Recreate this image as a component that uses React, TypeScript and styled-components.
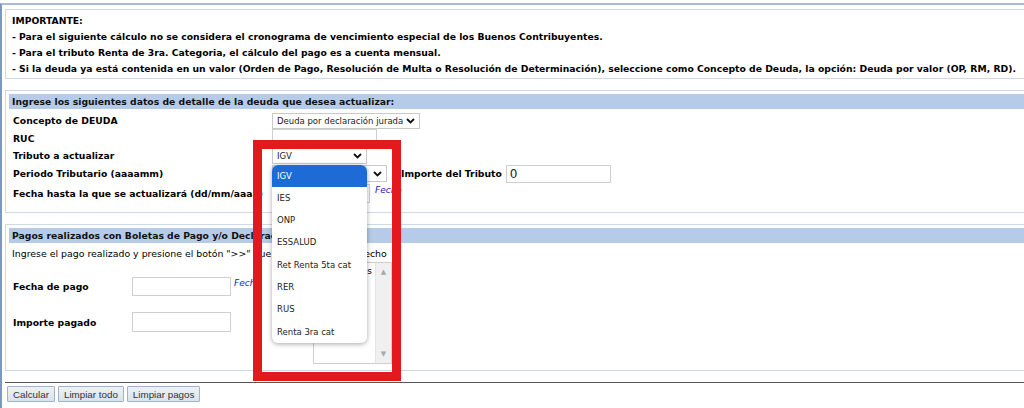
import React from 'react';
import styled, { createGlobalStyle } from 'styled-components';

const GlobalStyle = createGlobalStyle`
  html, body {
    margin: 0;
    padding: 0;
    background: #ffffff;
    overflow: hidden;
  }
  body {
    font-family: 'DejaVu Sans', Verdana, sans-serif;
    font-size: 9px;
    color: #000;
  }
`;

const Page = styled.div`
  padding-top: 3px;
  width: 1060px;
`;

const Frame = styled.div`
  border-top: 2px solid #a9bbd4;
  border-left: 2px solid #7b98c2;
  padding: 4px 0 6px 3px;
  min-height: 400px;
`;

const Notice = styled.div`
  border: 1px solid #cdd8e8;
  padding: 3px 6px 1px;
  font-weight: bold;
  font-size: 9.25px;
  line-height: 16px;
  margin-bottom: 11px;
`;

const Section = styled.div<{ $h: number }>`
  border: 1px solid #cdd8e8;
  padding: 3px 3px 0;
  margin-bottom: 11px;
  height: ${(p) => p.$h}px;
  box-sizing: border-box;
`;

const SectionTitle = styled.div`
  background: #b6cbe8;
  font-weight: bold;
  font-size: 9.25px;
  height: 15px;
  line-height: 15px;
  padding-left: 3px;
  color: #111;
  white-space: nowrap;
`;

const FormGrid = styled.div`
  display: grid;
  grid-template-columns: 259px 1fr;
  grid-template-rows: 17px 18px 17px 19px 21px;
  margin-top: 3px;
  padding-left: 4px;
  align-items: center;
`;

const Label = styled.div<{ $ml?: number }>`
  font-weight: bold;
  font-size: 9.25px;
  white-space: nowrap;
  margin-left: ${(p) => p.$ml ?? 0}px;
`;

const Cell = styled.div`
  display: flex;
  align-items: center;
`;

const SelectBox = styled.div<{ $w: number; $h?: number; $empty?: boolean }>`
  position: relative;
  width: ${(p) => p.$w}px;
  height: ${(p) => p.$h ?? 16}px;
  box-sizing: border-box;
  border: 1px solid #c9c9c9;
  background: #fff;
  display: flex;
  align-items: center;
  justify-content: ${(p) => (p.$empty ? 'flex-end' : 'space-between')};
  padding: 0 4px;
  font-size: 8.5px;
  color: #222;
  white-space: nowrap;
`;

const TextInput = styled.div<{ $w: number; $h?: number; $ml?: number }>`
  width: ${(p) => p.$w}px;
  height: ${(p) => p.$h ?? 18}px;
  margin-left: ${(p) => p.$ml ?? 0}px;
  box-sizing: border-box;
  border: 1px solid #cfcfcf;
  background: #fff;
  padding: 0 3px;
  display: flex;
  align-items: center;
  font-size: 12px;
  color: #222;
`;

const DateLink = styled.span<{ $ml?: number }>`
  color: #2222cc;
  font-style: italic;
  font-size: 9px;
  align-self: flex-start;
  margin: 1px 0 0 ${(p) => p.$ml ?? 0}px;
`;

const Hint = styled.div`
  margin: 5px 0 0 3px;
  font-size: 9.4px;
  white-space: nowrap;
  height: 13px;
`;

const PayBody = styled.div`
  display: flex;
  align-items: flex-start;
`;

const PayGrid = styled.div`
  display: grid;
  grid-template-columns: 119px 102px 1fr;
  grid-template-rows: 19px 16px 20px;
  width: 300px;
  padding-left: 4px;
  margin-top: 16px;
  align-items: center;
`;

const ListBox = styled.div`
  margin-top: 1px;
  width: 79px;
  height: 102px;
  box-sizing: border-box;
  border: 1px solid #cfcfcf;
  display: flex;
  font-size: 9px;
`;

const ListText = styled.div`
  flex: 1;
  padding: 3px 3px 0 0;
  white-space: nowrap;
  overflow: hidden;
  text-align: right;
`;

const ScrollTrack = styled.div`
  width: 15px;
  background: #f0f0f0;
  border-left: 1px solid #e4e4e4;
  display: flex;
  flex-direction: column;
  justify-content: space-between;
  align-items: center;
  padding: 5px 0;
  color: #a8a8a8;
  font-size: 7px;
`;

const ButtonBar = styled.div`
  border-top: 1px solid #555;
  margin-top: 11px;
  padding: 3px 0 0 2px;
  display: flex;
  gap: 3px;
`;

const Button = styled.button`
  font-family: 'Liberation Sans', Arial, sans-serif;
  font-size: 9.8px;
  color: #333;
  height: 16px;
  padding: 0 5px;
  background: linear-gradient(#eef2f7, #d9e2ee);
  border: 1px solid #9fb3cc;
  border-radius: 1px;
`;

const Anchor = styled.div`
  position: relative;
`;

const Highlight = styled.div`
  position: absolute;
  left: -19px;
  top: -8px;
  width: 148px;
  height: 241px;
  box-sizing: border-box;
  border: 9px solid #e3191d;
  pointer-events: none;
  z-index: 5;
`;

const Popup = styled.ul`
  position: absolute;
  left: 0;
  top: 17px;
  width: 95px;
  margin: 0;
  padding: 0;
  list-style: none;
  background: #fff;
  border-radius: 6px;
  box-shadow: 0 1px 5px rgba(0, 0, 0, 0.35);
  z-index: 6;
  overflow: hidden;
`;

const Option = styled.li<{ $active?: boolean }>`
  height: 22.3px;
  line-height: 22.3px;
  padding-left: 5px;
  font-size: 8.5px;
  color: ${(p) => (p.$active ? '#fff' : '#222')};
  background: ${(p) => (p.$active ? '#1c6bd6' : 'transparent')};
`;

const Chevron = () => (
  <svg width="9" height="6" viewBox="0 0 9 6">
    <polyline points="1,1 4.5,4.5 8,1" fill="none" stroke="#111" strokeWidth="1.8" />
  </svg>
);

const tributos = ['IGV', 'IES', 'ONP', 'ESSALUD', 'Ret Renta 5ta cat', 'RER', 'RUS', 'Renta 3ra cat'];

export default function App() {
  return (
    <Page>
      <GlobalStyle />
      <Frame>
        <Notice>
          <div>IMPORTANTE:</div>
          <div>- Para el siguiente cálculo no se considera el cronograma de vencimiento especial de los Buenos Contribuyentes.</div>
          <div>- Para el tributo Renta de 3ra. Categoria, el cálculo del pago es a cuenta mensual.</div>
          <div>
            - Si la deuda ya está contenida en un valor (Orden de Pago, Resolución de Multa o Resolución de Determinación),
            seleccione como Concepto de Deuda, la opción: Deuda por valor (OP, RM, RD).
          </div>
        </Notice>

        <Section $h={123}>
          <SectionTitle>Ingrese los siguientes datos de detalle de la deuda que desea actualizar:</SectionTitle>
          <FormGrid>
            <Label>Concepto de DEUDA</Label>
            <Cell>
              <SelectBox $w={148}>
                Deuda por declaración jurada <Chevron />
              </SelectBox>
            </Cell>
            <Label>RUC</Label>
            <Cell>
              <TextInput $w={105} />
            </Cell>
            <Label>Tributo a actualizar</Label>
            <Cell>
              <Anchor>
                <SelectBox $w={95}>
                  IGV <Chevron />
                </SelectBox>
                <Highlight />
                <Popup>
                  {tributos.map((t, i) => (
                    <Option key={t} $active={i === 0}>
                      {t}
                    </Option>
                  ))}
                </Popup>
              </Anchor>
            </Cell>
            <Label>Periodo Tributario (aaaamm)</Label>
            <Cell>
              <SelectBox $w={115} $h={17} $empty>
                <Chevron />
              </SelectBox>
              <Label $ml={14}>Importe del Tributo</Label>
              <TextInput $w={105} $ml={4}>0</TextInput>
            </Cell>
            <Label>Fecha hasta la que se actualizará (dd/mm/aaaa)</Label>
            <Cell>
              <TextInput $w={98} $h={19} />
              <DateLink $ml={5}>Fecha</DateLink>
            </Cell>
          </FormGrid>
        </Section>

        <Section $h={147}>
          <SectionTitle>Pagos realizados con Boletas de Pago y/o Declaraciones</SectionTitle>
          <Hint>Ingrese el pago realizado y presione el botón "&gt;&gt;" que está en su lado derecho</Hint>
          <PayBody>
            <PayGrid>
              <Label>Fecha de pago</Label>
              <TextInput $w={99} $h={19} />
              <DateLink>Fecha</DateLink>
              <div />
              <div />
              <div />
              <Label>Importe pagado</Label>
              <TextInput $w={99} $h={20} />
              <div />
            </PayGrid>
            <ListBox>
              <ListText>Sin pagos</ListText>
              <ScrollTrack>
                <span>▲</span>
                <span>▼</span>
              </ScrollTrack>
            </ListBox>
          </PayBody>
        </Section>

        <ButtonBar>
          <Button>Calcular</Button>
          <Button>Limpiar todo</Button>
          <Button>Limpiar pagos</Button>
        </ButtonBar>
      </Frame>
    </Page>
  );
}
